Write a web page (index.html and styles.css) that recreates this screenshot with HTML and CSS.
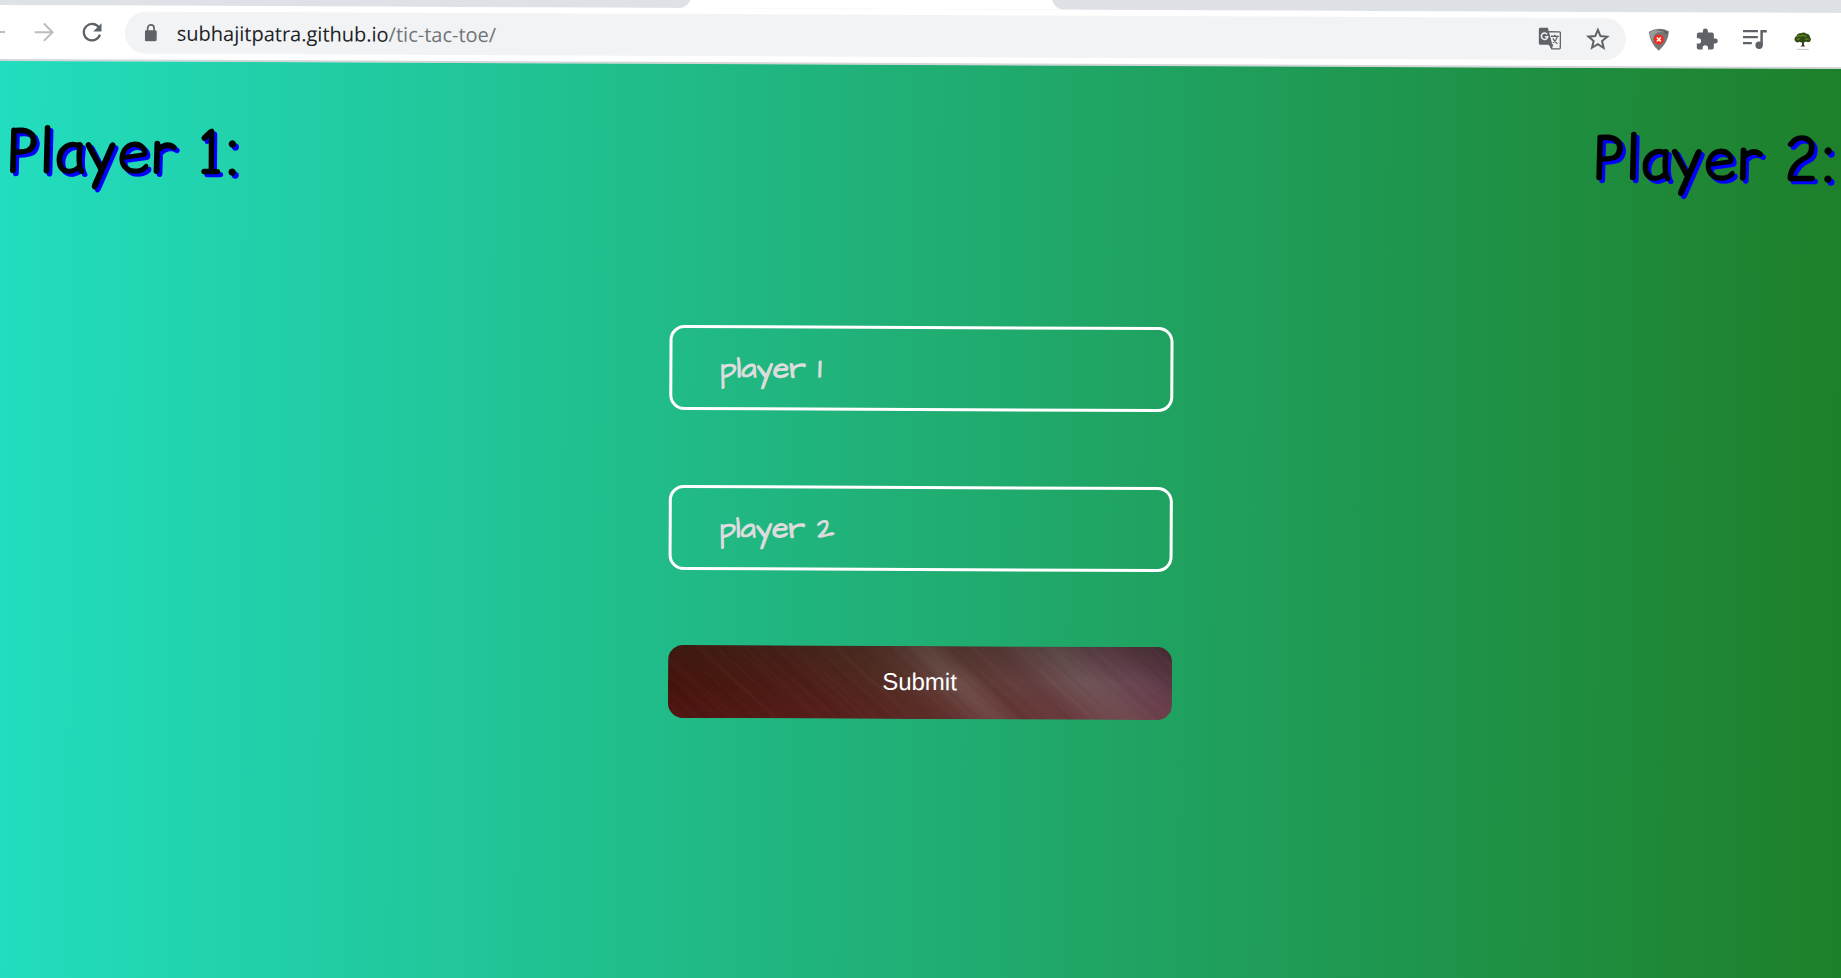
FILE: index.html
```html
<!DOCTYPE html>
<html lang="en">
<head>
<meta charset="utf-8">
<title>Tic Tac Toe</title>
<link rel="stylesheet" href="styles.css">
</head>
<body>
<div class="window">
  <div class="tabstrip"><span class="strip-left"></span><span class="tab"></span><span class="strip-right"></span></div>
  <header class="toolbar">
    <div class="nav">
      <button class="icon faint" type="button" aria-label="Back"><svg viewBox="0 0 24 24"><path d="M22 12H4M12 3l-9 9 9 9" fill="none" stroke="currentColor" stroke-width="2.200"/></svg></button>
      <button class="icon faint" type="button" aria-label="Forward"><svg viewBox="0 0 24 24"><path d="M2 12h19M12 2.500l9.500 9.500-9.500 9.500" fill="none" stroke="currentColor" stroke-width="2.200"/></svg></button>
      <button class="icon" type="button" aria-label="Reload"><svg viewBox="0 0 24 24"><path d="M20 7.200A9 9 0 1 0 20.800 14.500" fill="none" stroke="currentColor" stroke-width="2.500"/><path d="M22.500 2v9h-9z" fill="currentColor"/></svg></button>
    </div>
    <div class="omnibox">
      <svg class="lock" viewBox="0 0 12 18"><path d="M1.500 6.500h9A1.500 1.500 0 0 1 12 8v8a1.500 1.500 0 0 1-1.500 1.500h-9A1.500 1.500 0 0 1 0 16V8a1.500 1.500 0 0 1 1.500-1.500z" fill="currentColor"/><path d="M2.800 7V4.500a3.200 3.200 0 0 1 6.400 0V7" fill="none" stroke="currentColor" stroke-width="1.700"/></svg>
      <div class="url"><span class="host">subhajitpatra.github.io</span>/tic-tac-toe/</div>
      <button class="icon" type="button" aria-label="Translate"><svg viewBox="0 0 24 24"><path d="M11 5h10.500q1 0 1 1v15q0 1-1 1H14l-2-4.500" fill="#f1f3f4" stroke="currentColor" stroke-width="1.300"/><path d="M2.500 1H10l4.500 17h-12Q1 18 1 16.500v-14Q1 1 2.500 1z" fill="currentColor"/><path d="M10.500 17.500h5L14 22.500z" fill="currentColor"/><path d="M9.300 7.600A3.200 3.200 0 1 0 9.900 10H7" fill="none" stroke="#f1f3f4" stroke-width="1.500"/><path d="M13 9.500h8M17 8v1.500M19.500 9.800c-.7 2.500-2.500 5-4.500 6.200M15 11.500c1 2 2.500 4 4.500 5.500" fill="none" stroke="currentColor" stroke-width="1.300"/></svg></button>
      <button class="icon" type="button" aria-label="Bookmark this page"><svg viewBox="0 0 24 24"><path d="M12 2.800l2.600 6.300 6.800.6-5.200 4.400 1.600 6.700-5.800-3.600-5.800 3.600 1.600-6.700-5.200-4.400 6.800-.6z" fill="none" stroke="currentColor" stroke-width="2"/></svg></button>
    </div>
    <div class="extensions">
      <button class="icon" type="button" aria-label="Web protection"><svg viewBox="0 0 24 24"><path d="M2 4.500Q12-1 22 4q-.5 11-10 19.500Q3 16 2 4.500z" fill="#777"/><path d="M3 4.800Q12 .5 21 4.300l-1 2Q15 3 10 5.500 5 8 6.500 15 3 10.500 3 4.800z" fill="#9b9b9b"/><path d="M9 4q7-1.500 10 3l1.500 .2.500-2.700Q15 1.500 9 4z" fill="#5c5c5c"/><circle cx="12" cy="12.300" r="5" fill="#f22b1d"/><path d="M10 10.300l4 4M14 10.300l-4 4" stroke="#fff" stroke-width="1.500"/></svg></button>
      <button class="icon" type="button" aria-label="Extensions"><svg viewBox="0 0 24 24"><path d="M20.500 11H19V7c0-1.100-.9-2-2-2h-4V3.500a2.500 2.500 0 0 0-5 0V5H4c-1.100 0-2 .9-2 2v3.800h1.500a2.700 2.700 0 0 1 0 5.400H2V20c0 1.100.9 2 2 2h3.800v-1.500a2.700 2.700 0 0 1 5.400 0V22H17c1.100 0 2-.9 2-2v-4h1.500a2.500 2.500 0 0 0 0-5z" fill="currentColor"/></svg></button>
      <button class="icon" type="button" aria-label="Media controls"><svg viewBox="0 0 24 24"><path d="M0 3.500h15M0 9.500h15M0 15.500h9" stroke="currentColor" stroke-width="2.200"/><path d="M17.500 2.400H24v2.400h-4v12.400h-2.500z" fill="currentColor"/><circle cx="16.300" cy="17.600" r="3.700" fill="currentColor"/></svg></button>
      <button class="icon" type="button" aria-label="Profile"><svg viewBox="0 0 24 24"><path d="M11.300 12h1.700l.2 5.500 1.300 1.200h-5l1.600-1.200z" fill="#4a3520"/><path d="M4 13q-1-3 1.500-4.500Q6.500 5 10 5.500q3-2 5.500.3Q19 6 19 9q2 2 .3 4.500-2 1.500-4 .2-2 1.500-3.300.3-1.500 1.300-3.500 0Q6 15.500 4 13z" fill="#2f4a12"/><path d="M6 9.500l2-2 2 1 2-1.500 2 1.500 2-.5M6 12l3-1.500M14 11l4 .5" fill="none" stroke="#5e8420" stroke-width="1.200"/><path d="M6 21.500h12" stroke="#c9c9c9" stroke-width="1"/></svg></button>
    </div>
  </header>
  <main class="game">
    <div class="players"><h1>Player 1:</h1><h1>Player 2:</h1></div>
    <form class="names">
      <input type="text" placeholder="player 1" aria-label="player 1">
      <input type="text" placeholder="player 2" aria-label="player 2">
      <button class="submit" type="button">Submit</button>
    </form>
  </main>
</div>
</body>
</html>
```
FILE: styles.css
```css
* { box-sizing: border-box; }

html, body { height: 100%; }

body {
  margin: 0;
  overflow: hidden;
  background: #dee1e6;
  font-family: "Liberation Sans", Arial, sans-serif;
}

/* The whole window leans by a quarter degree; its margins bleed past the viewport. */
.window {
  display: flex;
  flex-direction: column;
  min-height: calc(100% + 24px);
  margin: -12px -12px 0 -8px;
  transform: rotate(0.25deg);
  transform-origin: 8px 12px;
}

.tabstrip {
  display: grid;
  grid-template-columns: 699px 361px 1fr;
  height: 17px;
  background: #fff;
}

.strip-left {
  background: #dee1e6;
  border-bottom-right-radius: 12px;
}

.strip-right {
  background: #dee1e6;
  border-bottom-left-radius: 12px;
}

.toolbar {
  display: flex;
  align-items: center;
  padding: 6px 38px 6px 0;
  background: #fff;
  border-bottom: 2px solid #d3d6d9;
}

.nav {
  display: flex;
  gap: 24px;
  margin: 0 21px 0 -8px;
}

.icon {
  flex: none;
  width: 24px;
  height: 24px;
  padding: 0;
  border: 0;
  background: none;
  color: #5f6368;
}

.icon svg {
  display: block;
  width: 100%;
  height: 100%;
}

.nav .icon svg { padding: 1px; }

.faint { color: #babcbe; }

.omnibox {
  flex: 1;
  display: flex;
  align-items: center;
  gap: 24px;
  height: 42px;
  padding: 0 16px 0 20px;
  border-radius: 21px;
  background: #f1f3f4;
}

.lock {
  width: 12px;
  height: 18px;
  color: #5f6368;
}

.url {
  flex: 1;
  margin-left: -4px;
  padding-top: 2px;
  font: 20px/28px "Segoe UI", "Open Sans", "Noto Sans", sans-serif;
  color: #70757a;
}

.host { color: #202124; }

.extensions {
  display: flex;
  gap: 24px;
  margin-left: 21px;
}

.game {
  flex: 1;
  background: linear-gradient(to right, #22debf, #1e7f29);
}

.players {
  display: flex;
  justify-content: space-between;
  padding: 48px 15px 0 16px;
}

.players h1 {
  margin: 0;
  font: 400 60px/84px "Comic Sans MS", "Comic Relief", "Comic Neue", Lato, cursive;
  color: #000;
  text-shadow: 3px 3px 0 #00f;
}

.names {
  display: flex;
  flex-direction: column;
  gap: 75px;
  width: 504px;
  margin: 129px auto 0;
}

.names input {
  height: 85px;
  padding: 0 48px;
  border: 3px solid #fff;
  border-radius: 15px;
  background: transparent;
  color: #fff;
  font: 700 30px/36px "Architects Daughter", Lato, sans-serif;
}

.names input::placeholder {
  color: #dcdcdc;
  opacity: 1;
}

.submit {
  height: 73px;
  padding: 0 6px 2px;
  border: 0;
  border-radius: 15px;
  color: #fff;
  font: 24px/28px "Liberation Sans", Arial, sans-serif;
  background:
    linear-gradient(to bottom, rgba(40, 32, 20, 0.3), transparent 50%, rgba(125, 35, 45, 0.2)),
    repeating-linear-gradient(43deg, transparent 0 9px, rgba(255, 255, 255, 0.02) 11px, transparent 14px 23px, rgba(0, 0, 0, 0.05) 26px, transparent 31px),
    repeating-linear-gradient(41deg, transparent 0 5px, rgba(255, 255, 255, 0.02) 7px, transparent 9px 13px),
    linear-gradient(46deg, #43110a 0%, #48170f 15%, #4e1e18 30%, #522b22 43%, #5a342e 50%, #6a4b45 55%, #6c4d47 57%, #5f3a36 62%, #643f40 70%, #6f5557 78%, #684552 87%, #4e2c3a 100%);
}
```
